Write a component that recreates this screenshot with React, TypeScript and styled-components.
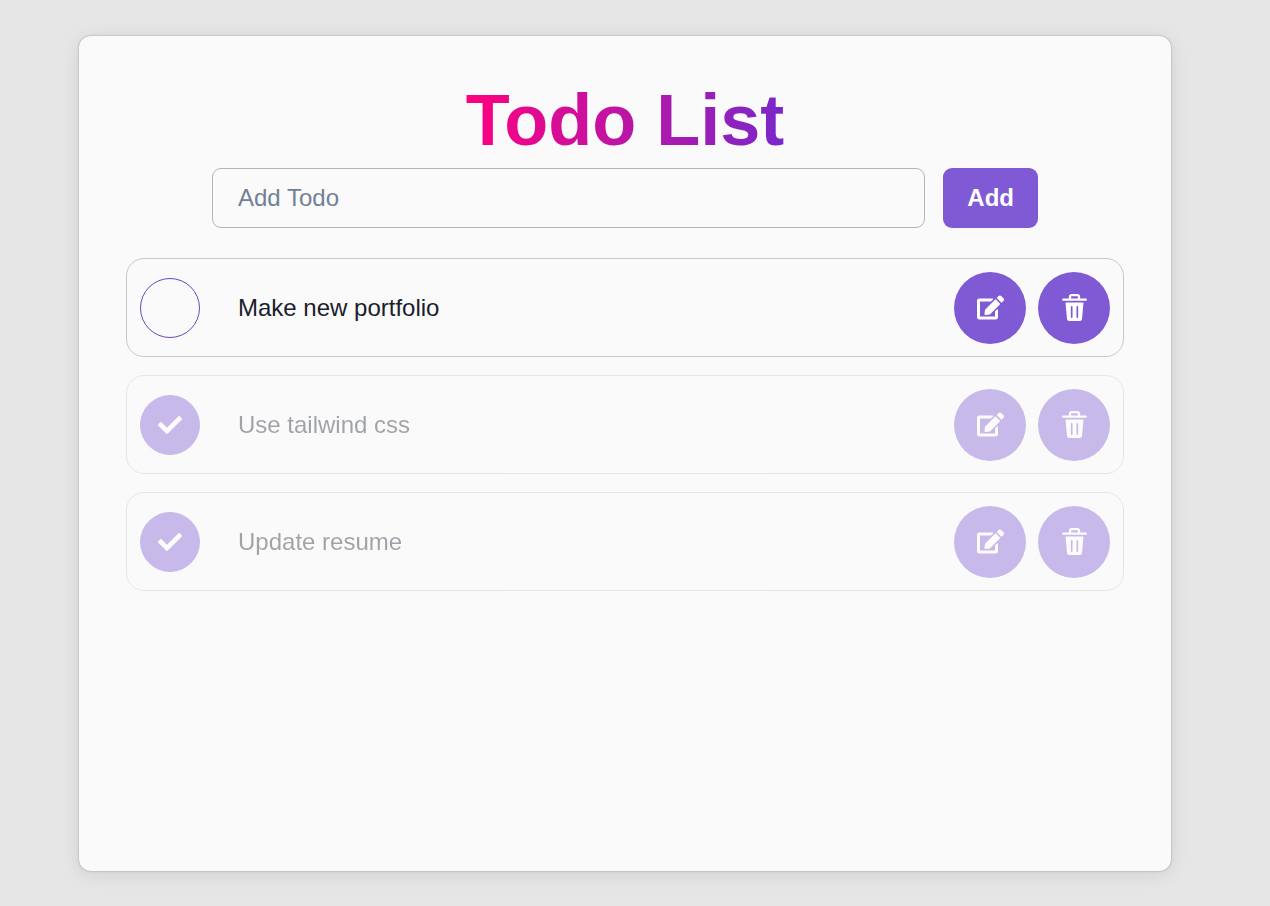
import React, { useState } from "react";
import styled, { createGlobalStyle } from "styled-components";
import { FaCheck, FaEdit } from "react-icons/fa";

const GlobalStyle = createGlobalStyle`
  *, *::before, *::after { box-sizing: border-box; }
  body {
    margin: 0;
    background: #e6e6e6;
    color: #1a202c;
    font-family: "Liberation Sans", Arial, sans-serif;
    font-size: 24px;
    line-height: 36px;
  }
`;

const Page = styled.div`
  min-height: 100vh;
  display: flex;
  padding: 36px 99px 35px 79px;
`;

const Card = styled.main`
  flex: 1;
  min-width: 0;
  padding: 48px 47px;
  border-radius: 12px;
  background: #fafafa;
  box-shadow: 0 0 2px rgba(0, 0, 0, 0.35), 0 3px 18px rgba(0, 0, 0, 0.1);
`;

const Title = styled.h1`
  width: fit-content;
  margin: 0 auto;
  font-size: 72px;
  line-height: 72px;
  padding-bottom: 12px;
  font-weight: 700;
  color: transparent;
  background: linear-gradient(to left, #7928ca, #ff0080);
  background-clip: text;
  -webkit-background-clip: text;
`;

const Form = styled.form`
  display: flex;
  gap: 18px;
  padding: 0 86px;
`;

const TextField = styled.input`
  flex: 1;
  min-width: 0;
  height: 60px;
  padding: 0 25px;
  border: 1px solid #b5b5b8;
  border-radius: 9px;
  background: transparent;
  color: inherit;
  font: inherit;
  &::placeholder { color: #718096; opacity: 1; }
`;

const AddButton = styled.button`
  height: 60px;
  padding: 0 24px;
  border: 0;
  border-radius: 9px;
  background: #805ad5;
  color: #fff;
  font: inherit;
  font-weight: 700;
  cursor: pointer;
`;

const List = styled.ul`
  display: flex;
  flex-direction: column;
  gap: 18px;
  margin: 30px 0 0;
  padding: 0;
  list-style: none;
`;

const Row = styled.li<{ $done: boolean }>`
  display: flex;
  align-items: center;
  gap: 12px;
  min-height: 99px;
  padding: 0 13px;
  border: 1px solid #c8c8cb;
  border-radius: 18px;
  opacity: ${(p) => (p.$done ? 0.4 : 1)};
`;

const TodoLabel = styled.label`
  flex: 1;
  min-width: 0;
  display: flex;
  align-items: center;
  gap: 38px;
  cursor: pointer;
`;

const Tick = styled.span`
  display: grid;
  place-items: center;
  color: #fff;
  & > * { grid-area: 1 / 1; }
  svg { pointer-events: none; z-index: 1; }
`;

const TickBox = styled.input`
  appearance: none;
  width: 60px;
  height: 60px;
  margin: 0;
  border: 1px solid #6b46c1;
  border-radius: 50%;
  cursor: pointer;
  &:checked { background: #805ad5; border-color: #805ad5; }
`;

const RoundButton = styled.button`
  display: grid;
  place-items: center;
  width: 72px;
  height: 72px;
  padding: 0;
  border: 0;
  border-radius: 50%;
  background: #805ad5;
  color: #fff;
  cursor: pointer;
`;

const BinIcon = () => (
  <svg width="27" height="27" viewBox="0 0 24 24" fill="currentColor" aria-hidden="true">
    <path d="M19.452 7.5H4.547a.5.5,0,0,0-.5.545l1.287,14.136A2,2,0,0,0,7.326,24h9.347a2,2,0,0,0,1.992-1.819L19.95,8.044a.5.5,0,0,0-.129-.382A.5.5,0,0,0,19.452,7.5Zm-9.2,13a.75.75,0,0,1-1.5,0v-9a.75.75,0,0,1,1.5,0Zm5,0a.75.75,0,0,1-1.5,0v-9a.75.75,0,0,1,1.5,0Z" />
    <path d="M22,4H17.25A.25.25,0,0,1,17,3.75V2.5A2.5,2.5,0,0,0,14.5,0h-5A2.5,2.5,0,0,0,7,2.5V3.75A.25.25,0,0,1,6.75,4H2A1,1,0,0,0,2,6H22a1,1,0,0,0,0-2ZM9,3.75V2.5A.5.5,0,0,1,9.5,2h5a.5.5,0,0,1,.5.5V3.75a.25.25,0,0,1-.25.25H9.25A.25.25,0,0,1,9,3.75Z" />
  </svg>
);

type Todo = { id: number; text: string; done: boolean };

const initialTodos: Todo[] = [
  { id: 1, text: "Make new portfolio", done: false },
  { id: 2, text: "Use tailwind css", done: true },
  { id: 3, text: "Update resume", done: true },
];

export default function App() {
  const [todos, setTodos] = useState(initialTodos);
  const [draft, setDraft] = useState("");

  const add = (e: React.FormEvent) => {
    e.preventDefault();
    const text = draft.trim();
    if (!text) return;
    setTodos([{ id: Date.now(), text, done: false }, ...todos]);
    setDraft("");
  };

  const toggle = (id: number) =>
    setTodos(todos.map((t) => (t.id === id ? { ...t, done: !t.done } : t)));

  const remove = (id: number) => setTodos(todos.filter((t) => t.id !== id));

  const edit = (todo: Todo) => {
    setDraft(todo.text);
    remove(todo.id);
  };

  return (
    <>
      <GlobalStyle />
      <Page>
        <Card>
          <Title>Todo List</Title>
          <Form onSubmit={add}>
            <TextField
              type="text"
              aria-label="Add Todo"
              placeholder="Add Todo"
              value={draft}
              onChange={(e) => setDraft(e.target.value)}
            />
            <AddButton type="submit">Add</AddButton>
          </Form>
          <List>
            {todos.map((todo) => (
              <Row key={todo.id} $done={todo.done}>
                <TodoLabel>
                  <Tick>
                    <TickBox type="checkbox" checked={todo.done} onChange={() => toggle(todo.id)} />
                    {todo.done && <FaCheck size={24} />}
                  </Tick>
                  <span>{todo.text}</span>
                </TodoLabel>
                <RoundButton type="button" aria-label="Edit" onClick={() => edit(todo)}>
                  <FaEdit size={27} />
                </RoundButton>
                <RoundButton type="button" aria-label="Delete" onClick={() => remove(todo.id)}>
                  <BinIcon />
                </RoundButton>
              </Row>
            ))}
          </List>
        </Card>
      </Page>
    </>
  );
}
